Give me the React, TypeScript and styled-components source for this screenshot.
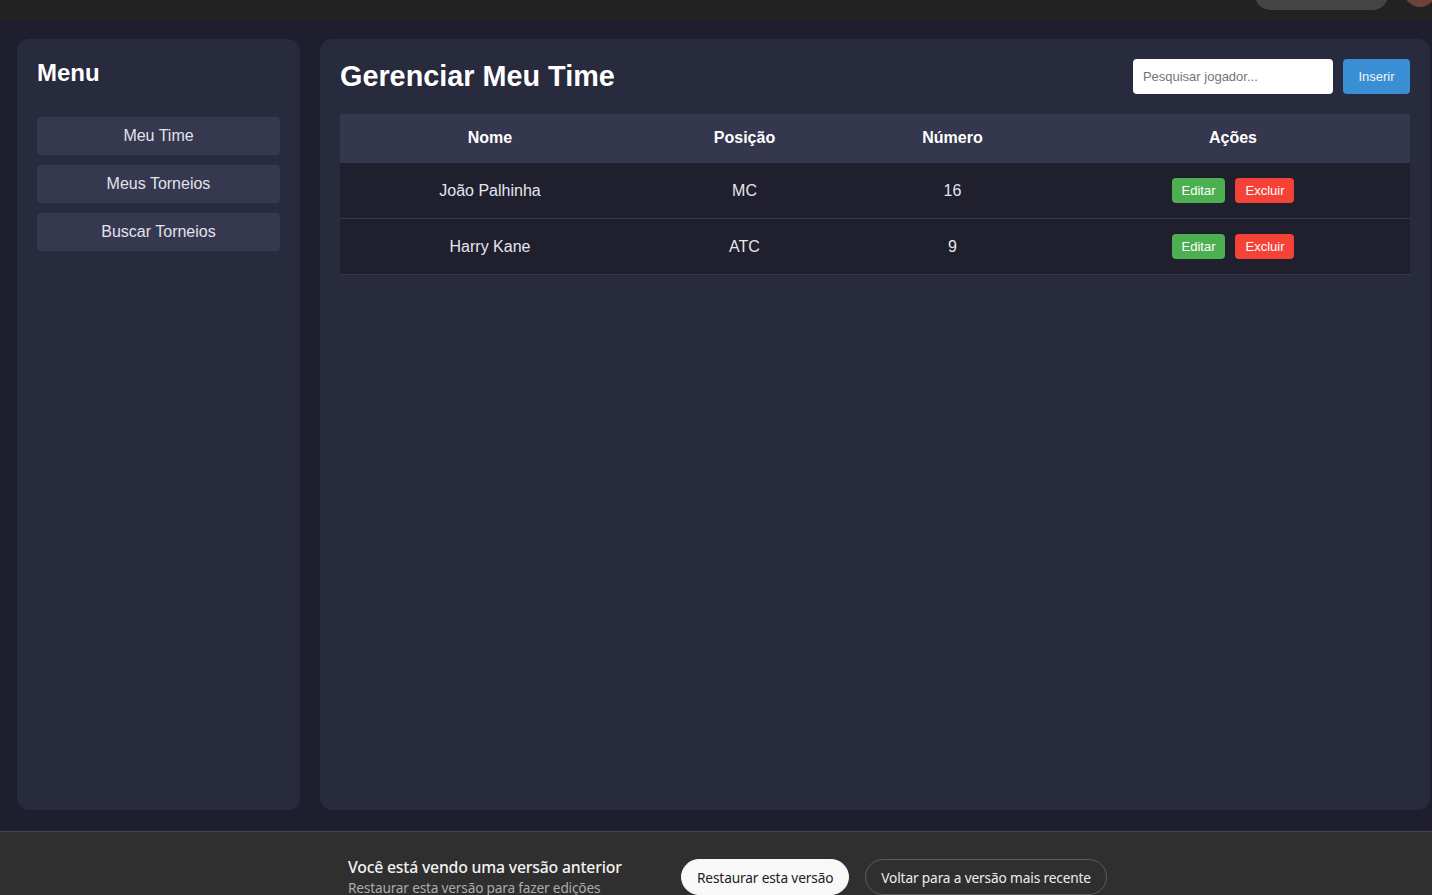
import React from "react";
import styled, { createGlobalStyle } from "styled-components";

const GlobalStyle = createGlobalStyle`
  html, body { margin: 0; padding: 0; height: 100%; overflow: hidden; }
  body { background: #1e1e2e; font-family: "Liberation Sans", Arial, sans-serif; }
  #root { height: 100%; }
  * { box-sizing: border-box; }
`;

const Screen = styled.div`
  height: 100vh;
  display: grid;
  grid-template-rows: 20px 1fr 64px;
`;

const TopBar = styled.div`
  background: #222222;
  display: flex;
  justify-content: flex-end;
  align-items: flex-start;
  overflow: hidden;
  gap: 16px;
`;

const TopPill = styled.div`
  width: 133px;
  height: 30px;
  margin-top: -20px;
  border-radius: 15px;
  background: #444444;
`;

const Avatar = styled.div`
  width: 32px;
  height: 32px;
  margin-top: -25px;
  margin-right: -4px;
  border-radius: 50%;
  background: #6e4237;
`;

const Content = styled.div`
  display: flex;
  gap: 20px;
  padding: 19px 2px 21px 17px;
  min-height: 0;
`;

const Card = styled.div`
  background: #282a3e;
  border-radius: 12px;
  padding: 20px;
`;

const Sidebar = styled(Card)`
  width: 283px;
  flex-shrink: 0;
`;

const MenuTitle = styled.h2`
  margin: 0 0 30px;
  font-size: 24px;
  font-weight: 700;
  color: #ffffff;
`;

const MenuList = styled.div`
  display: flex;
  flex-direction: column;
  gap: 10px;
`;

const MenuButton = styled.button`
  height: 38px;
  border: none;
  border-radius: 4px;
  background: #363850;
  color: #e2e2ea;
  font-family: "Liberation Sans", Arial, sans-serif;
  font-size: 16px;
  cursor: pointer;
`;

const Main = styled(Card)`
  flex: 1;
  min-width: 0;
`;

const MainHeader = styled.div`
  display: flex;
  align-items: center;
  justify-content: space-between;
  margin-bottom: 20px;
`;

const PageTitle = styled.h1`
  margin: 0;
  font-size: 28.8px;
  font-weight: 700;
  color: #ffffff;
`;

const Actions = styled.div`
  display: flex;
  gap: 10px;
`;

const SearchInput = styled.input`
  width: 200px;
  height: 35px;
  border: none;
  border-radius: 4px;
  background: #ffffff;
  padding: 0 10px;
  font-family: "Liberation Sans", Arial, sans-serif;
  font-size: 13px;
  color: #222;
  outline: none;
  &::placeholder { color: #757575; }
`;

const PrimaryButton = styled.button`
  height: 35px;
  padding: 0 15.5px;
  border: none;
  border-radius: 4px;
  background: #3a8ed4;
  color: #eef4fa;
  font-family: "Liberation Sans", Arial, sans-serif;
  font-size: 13px;
  cursor: pointer;
`;

const Table = styled.table`
  width: 100%;
  border-collapse: separate;
  border-spacing: 0;
  table-layout: fixed;
`;

const HeadCell = styled.th`
  background: #35374e;
  color: #ffffff;
  font-size: 16px;
  font-weight: 700;
  padding: 15px 15px 16px;
  text-align: center;
`;

const Cell = styled.td`
  background: #1f1f2e;
  border-bottom: 1px solid #363849;
  padding: 15px;
  text-align: center;
  color: #e6e6ec;
  font-size: 16px;
`;

const SmallButton = styled.button<{ $variant: "edit" | "delete" }>`
  height: 25px;
  padding: 0 10px;
  margin: 0 5px;
  border: none;
  border-radius: 4px;
  background: ${(p) => (p.$variant === "edit" ? "#4caf50" : "#f44336")};
  color: #ffffff;
  font-family: "Liberation Sans", Arial, sans-serif;
  font-size: 13px;
  vertical-align: middle;
  cursor: pointer;
`;

const Banner = styled.div`
  background: #2f2f2f;
  border-top: 1px solid #454545;
  overflow: hidden;
  display: flex;
  align-items: flex-start;
  padding: 24px 0 0 348px;
  font-family: "Noto Sans", "Open Sans", sans-serif;
`;

const BannerText = styled.div`
  width: 333px;
  display: flex;
  flex-direction: column;
`;

const BannerTitle = styled.div`
  font-size: 15.8px;
  font-weight: 500;
  line-height: 22px;
  color: #f2f2f2;
  letter-spacing: -0.2px;
  white-space: nowrap;
`;

const BannerSub = styled.div`
  font-size: 13.7px;
  line-height: 19px;
  color: #ababab;
  letter-spacing: -0.2px;
  white-space: nowrap;
`;

const BannerButtons = styled.div`
  display: flex;
  gap: 16px;
  margin-top: 3px;
`;

const PillButton = styled.button<{ $solid?: boolean }>`
  height: 36px;
  padding: 0 15px;
  border-radius: 18px;
  border: 1px solid ${(p) => (p.$solid ? "#f8f8f8" : "#5c5c5c")};
  background: ${(p) => (p.$solid ? "#f8f8f8" : "transparent")};
  color: ${(p) => (p.$solid ? "#1c1c1c" : "#ececec")};
  font-family: "Noto Sans", "Open Sans", sans-serif;
  font-size: 13.7px;
  letter-spacing: -0.15px;
  white-space: nowrap;
  cursor: pointer;
`;

const players = [
  { name: "João Palhinha", pos: "MC", num: 16 },
  { name: "Harry Kane", pos: "ATC", num: 9 },
];

export default function App() {
  return (
    <>
      <GlobalStyle />
      <Screen>
        <TopBar>
          <TopPill />
          <Avatar />
        </TopBar>
        <Content>
          <Sidebar>
            <MenuTitle>Menu</MenuTitle>
            <MenuList>
              <MenuButton>Meu Time</MenuButton>
              <MenuButton>Meus Torneios</MenuButton>
              <MenuButton>Buscar Torneios</MenuButton>
            </MenuList>
          </Sidebar>
          <Main>
            <MainHeader>
              <PageTitle>Gerenciar Meu Time</PageTitle>
              <Actions>
                <SearchInput placeholder="Pesquisar jogador..." />
                <PrimaryButton>Inserir</PrimaryButton>
              </Actions>
            </MainHeader>
            <Table>
              <colgroup>
                <col style={{ width: 300 }} />
                <col style={{ width: 209 }} />
                <col style={{ width: 207 }} />
                <col />
              </colgroup>
              <thead>
                <tr>
                  <HeadCell>Nome</HeadCell>
                  <HeadCell>Posição</HeadCell>
                  <HeadCell>Número</HeadCell>
                  <HeadCell>Ações</HeadCell>
                </tr>
              </thead>
              <tbody>
                {players.map((p) => (
                  <tr key={p.name}>
                    <Cell>{p.name}</Cell>
                    <Cell>{p.pos}</Cell>
                    <Cell>{p.num}</Cell>
                    <Cell>
                      <SmallButton $variant="edit">Editar</SmallButton>
                      <SmallButton $variant="delete">Excluir</SmallButton>
                    </Cell>
                  </tr>
                ))}
              </tbody>
            </Table>
          </Main>
        </Content>
        <Banner>
          <BannerText>
            <BannerTitle>Você está vendo uma versão anterior</BannerTitle>
            <BannerSub>Restaurar esta versão para fazer edições</BannerSub>
          </BannerText>
          <BannerButtons>
            <PillButton $solid>Restaurar esta versão</PillButton>
            <PillButton>Voltar para a versão mais recente</PillButton>
          </BannerButtons>
        </Banner>
      </Screen>
    </>
  );
}
